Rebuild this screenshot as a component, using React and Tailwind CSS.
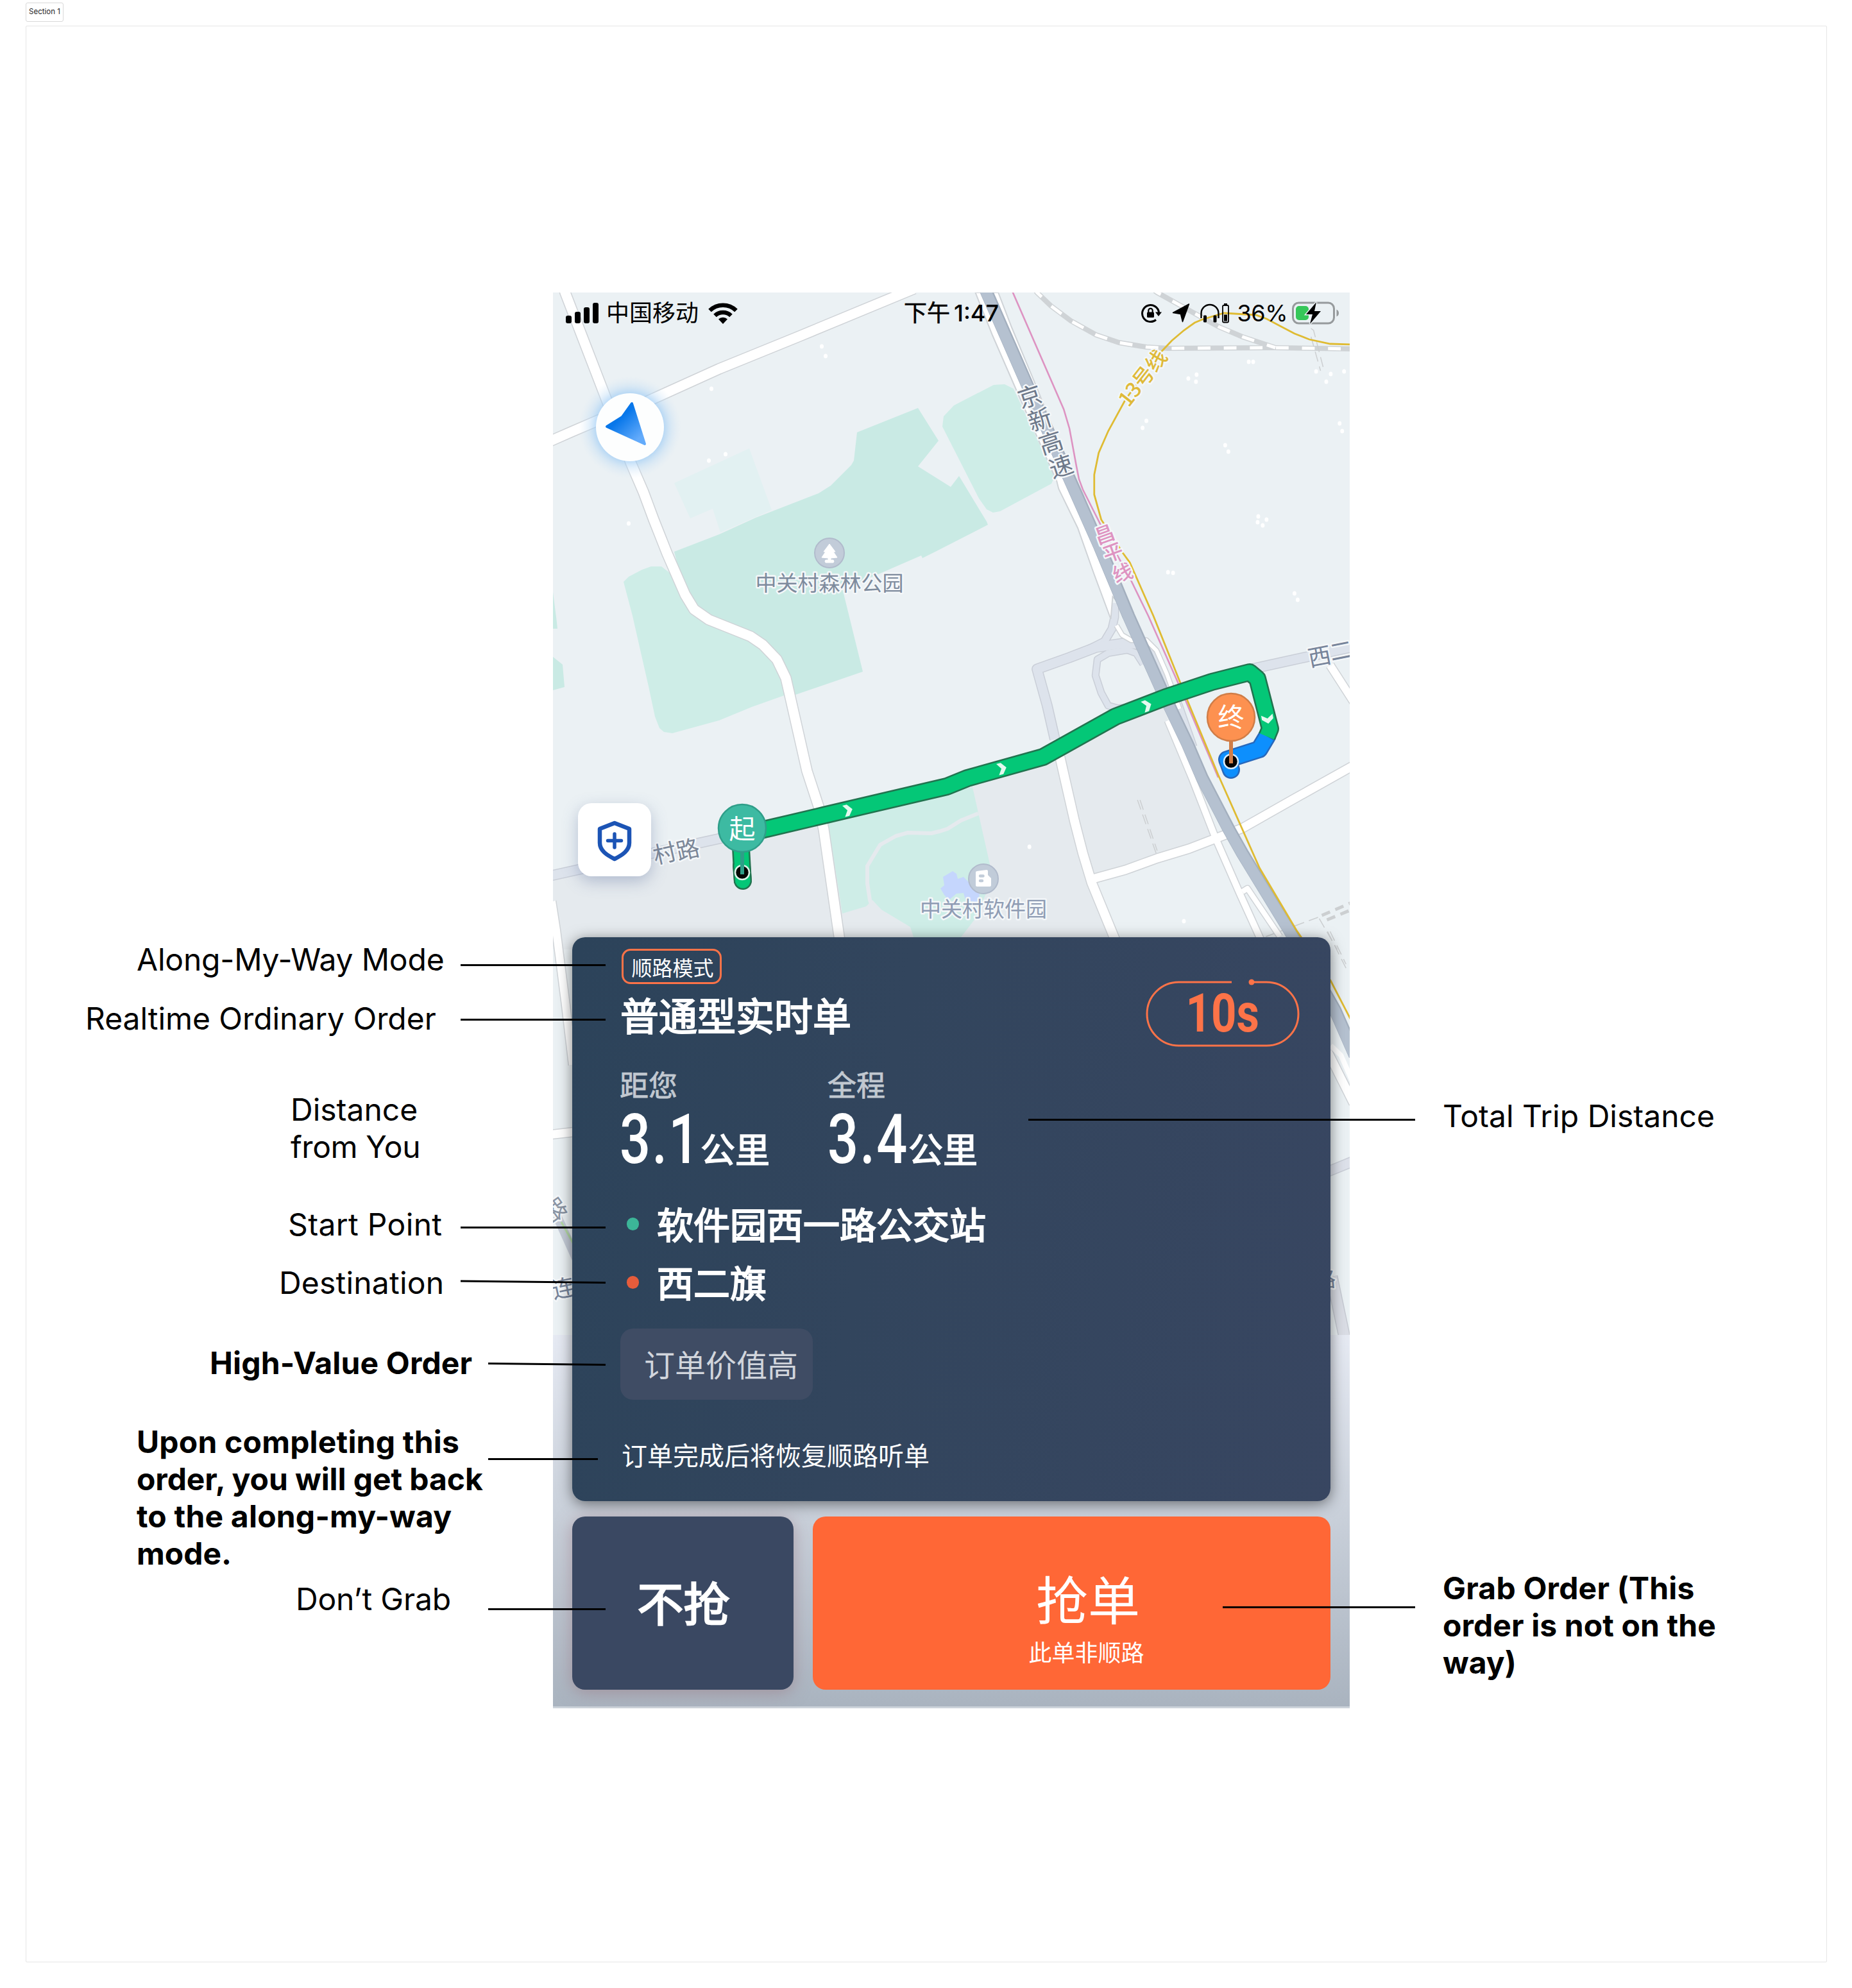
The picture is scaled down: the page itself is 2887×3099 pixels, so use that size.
import React from "react";

const CJK = "font-['Noto_Sans_CJK_SC',sans-serif]";

const casing = "#cfd3d7";

function Road({ d, w, fill = "#ffffff", edge = casing }) {
  return (
    <g fill="none" strokeLinejoin="round">
      <path d={d} stroke={edge} strokeWidth={w + 3} />
      <path d={d} stroke={fill} strokeWidth={w} />
    </g>
  );
}

function RoadNetwork({ roads }) {
  return (
    <g fill="none" strokeLinejoin="round">
      {roads.map(([d, w]) => (
        <path key={d} d={d} stroke={casing} strokeWidth={w + 3} />
      ))}
      {roads.map(([d, w]) => (
        <path key={`${d}-fill`} d={d} stroke="#fff" strokeWidth={w} />
      ))}
    </g>
  );
}

function MapText({ x, y, r = 0, size = 36, color, children, weight = 400 }) {
  return (
    <text
      x={x}
      y={y}
      transform={`rotate(${r} ${x} ${y})`}
      fontSize={size}
      fontWeight={weight}
      fill={color}
      stroke="#f4f7f9"
      strokeWidth="5"
      strokeLinejoin="round"
      paintOrder="stroke"
      textAnchor="middle"
      dy="0.37em"
    >
      {children}
    </text>
  );
}

const westRoads = [
  ["M876 440L881 456L952 640L984 723L1003 767L1019 810L1040 863L1068 927L1082 950L1105 966L1170 992L1189 1005L1211 1028L1225 1057L1231 1083L1258 1202L1276 1257L1284 1293L1311 1480", 15],
  ["M850 691L891 673L933 655L995 632L1121 575L1244 525L1425 450", 15],
  ["M860 1405L867 1450L882 1567L893 1660", 12],
  ["M855 1769L900 1764", 13],
  ["M2070 1640L2110 1720", 13],
];

const eastRoads = [
  ["M1654 1180L1677 1280L1690 1330L1704 1376L1745 1475", 14],
  ["M1824 1123L1862 1213L1899 1307L1937 1393L1970 1465", 10],
  ["M1941 1390L1949 1385L2000 1460", 8],
  ["M2079 1037L2116 1094", 12],
  ["M1702 1371L1757 1356L1807 1338L1857 1323L1899 1307L1941 1291L2021 1246L2120 1191", 13],
];

const ramps = [
  "M1950 1044L2116 1008",
  "M1646 1152L1634 1100L1618 1043L1669 1025L1711 1009L1753 1003L1776 1004L1795 1016L1809 1036L1839 1100L1862 1165",
];

const westSpecks = [
  [1281, 540], [1287, 555], [1109, 606], [1131, 708], [1105, 718], [980, 816],
];

const eastSpecks = [
  [1951, 564], [1958, 564], [1856, 590], [1869, 584], [1868, 595], [2057, 579],
  [2080, 583], [2073, 595], [2101, 579], [1790, 656], [1784, 667], [2094, 660],
  [2098, 672], [1914, 694], [1919, 704], [1966, 805], [1979, 810], [1965, 814],
  [1973, 819], [1824, 892], [1832, 893], [2023, 925], [2028, 935], [1606, 1320],
  [1849, 1436],
];

const route =
  "M1158 1376L1154 1303L1195 1292L1284 1271L1476 1226L1508 1213L1626 1180L1739 1117L1817 1087L1889 1063L1948 1048L1960 1058L1980 1136L1975 1148";
const routeEnd = "M1975 1148L1963 1168L1913 1184L1919 1200";
const highway =
  "M1533 440L1539 456L1604 603L1665 737L1717 853L1762 960L1813 1073L1855 1160L1878 1213L1920 1293L1941 1330L2015 1450L2087 1575L2118 1645";
const railA =
  "M1612 448L1618 456L1640 477L1671 500L1711 522L1747 534L1790 541L1824 543L1991 542L2118 544";
const railB = "M1796 448L1807 456L1903 509L1941 525L1993 542";

function Specks({ points }) {
  return points.map(([x, y]) => (
    <ellipse key={`${x}-${y}`} cx={x} cy={y} rx="3" ry="3.6" fill="#fff" />
  ));
}

function Chevron({ x, y, r }) {
  return (
    <path
      transform={`translate(${x} ${y}) rotate(${r})`}
      d="M-7 -9L0 -9L7 0L0 9L-7 9L-1 0Z"
      fill="#e4f9ef"
    />
  );
}

function CityMap() {
  return (
    <svg
      className="absolute inset-0 h-full w-full font-['Noto_Sans_CJK_SC',sans-serif]"
      viewBox="862 456 1242 2207"
      preserveAspectRatio="none"
    >
      <defs>
        <linearGradient id="veil" x1="0" y1="0" x2="0" y2="1">
          <stop offset="0" stopColor="#e6eaf3" />
          <stop offset="0.5" stopColor="#c8cfd9" />
          <stop offset="1" stopColor="#a9b3bf" />
        </linearGradient>
        <linearGradient id="arrow" x1="0.2" y1="0.2" x2="0.8" y2="0.9">
          <stop offset="0.25" stopColor="#0877ea" />
          <stop offset="1" stopColor="#63abfb" />
        </linearGradient>
        <radialGradient id="glow">
          <stop offset="0.6" stopColor="#8cc3f5" stopOpacity="0.75" />
          <stop offset="0.8" stopColor="#b5d7f5" stopOpacity="0.35" />
          <stop offset="1" stopColor="#d5e6f5" stopOpacity="0" />
        </radialGradient>
      </defs>
      <rect x="862" y="456" width="1242" height="2207" fill="#ebf1f4" />
      <path d="M862 1372L1170 1298L1475 1228L1640 1185L1760 1120L1812 1100L1895 1307L1703 1372L1738 1480L862 1480Z" fill="#e5eaee" />

      {/* parks and water */}
      <g fill="#ceede7">
        <path d="M972 907L980 899L1001 888L1015 883L1031 883L1044 893L1080 950L1189 1005L1225 1060L1231 1081L1172 1102L1121 1123L1048 1143L1035 1141L1028 1135L1021 1117L1011 1070L986 960Z" />
        <path d="M1549 600L1566 599L1580 606L1644 743L1639 754L1559 797L1548 799L1538 794L1526 777L1469 665L1471 649L1487 632Z" />
        <path d="M1289 1270L1516 1227L1543 1347L1543 1380L1518 1435L1491 1470L1427 1470L1419 1445L1374 1418L1360 1403L1350 1413L1313 1424Z" />
      </g>
      <path d="M1051 753L1168 699L1203 795L1123 830L1111 793L1076 808Z" fill="#e2f1f2" />
      <g fill="#c9eae4">
        <path d="M1051 860L1121 833L1178 807L1276 769L1295 757L1327 725L1331 718L1336 674L1431 636L1463 687L1431 727L1482 759L1495 742L1538 813L1540 818L1460 859L1438 870L1436 866L1367 896L1313 917L1345 1047L1240 1083L1225 1057L1189 1005L1105 965L1068 927Z" />
        <path d="M862 923L868 970L869 980L862 980Z" />
        <path d="M862 1024L877 1036L880 1071L862 1076Z" />
      </g>
      <path d="M1525 1268L1498 1279L1477 1292L1464 1296L1452 1299L1415 1298L1397 1303L1372 1317L1352 1350L1352 1377L1356 1403L1362 1420" fill="none" stroke="#e5eaee" strokeWidth="6" />
      <path d="M1470 1367L1485 1358L1491 1362L1493 1370L1502 1367L1508 1373L1520 1388L1527 1393L1525 1407L1505 1403L1502 1392L1491 1393L1479 1403L1472 1395L1466 1385L1472 1380Z" fill="#c5d6fd" />

      <Specks points={westSpecks} />
      <Road d="M850 1367L990 1336L1150 1301" w={14} fill="#dde3ec" edge="#c9ced7" />
      <RoadNetwork roads={westRoads} />

      {/* eastern district */}
      <g transform="matrix(0.991 0 0 1 13.14 0)">
        <Specks points={eastSpecks} />
        <g fill="none">
          <g stroke="#cfd3d6" strokeWidth="8">
            <path d={railA} />
            <path d={railB} />
          </g>
          <g stroke="#fff" strokeWidth="5" strokeDasharray="20 21">
            <path d={railA} />
            <path d={railB} />
          </g>
          <g stroke="#cccfd1" strokeWidth="1.5" strokeDasharray="16 8">
            <path d="M2049 512L2053 515L2068 572" />
            <path d="M2049 525L2064 578" />
            <path d="M1776 1247L1806 1332" />
            <path d="M1780 1247L1807 1326" />
            <path d="M1978 1460L2060 1430" />
            <path d="M2075 1452L2106 1513" />
            <path d="M2079 1452L2104 1503" />
            <path d="M2062 1432L2090 1480" />
          </g>
          <g stroke="#cccfd1" strokeWidth="5" strokeDasharray="14 9">
            <path d="M2066 1427L2115 1406" />
            <path d="M2074 1434L2115 1417" />
          </g>
        </g>

        {ramps.map((d) => (
          <Road key={d} d={d} w={14} fill="#dde3ec" edge="#c9ced7" />
        ))}
        <Road d="M1740 940L1740 962L1736 980L1724 1000L1700 1012" w={11} fill="#dde3ec" edge="#c9ced7" />
        <Road d="M1785 1035L1774 1018L1760 1013L1730 1018L1713 1028L1710 1053L1719 1080L1730 1100L1745 1104L1760 1103" w={9} fill="#dde3ec" edge="#c9ced7" />
        <path d="M1618 1043L1669 1025L1711 1009L1753 1003L1776 1004" fill="none" stroke="#dde3ec" strokeWidth="14" />
        <Road d="M1743 975L1752 990L1766 998L1790 998L1806 1014L1822 1050L1842 1105" w={6} />
        <RoadNetwork roads={eastRoads} />
        <path d="M1521 456L1548 523L1585 607L1649 750L1652 762L1682 823L1707 893L1734 965L1737 930L1765 960L1690 770L1680 750L1652 690L1618 605L1578 510L1557 456Z" fill="#fff" stroke={casing} strokeWidth="2" />
        <path d="M2080 1630L2096 1645L2116 1690" fill="none" stroke="#fff" strokeWidth="8" />

        <path d={highway} fill="none" stroke="#a3afbe" strokeWidth="20" strokeLinejoin="round" />
        <path d={highway} fill="none" stroke="#b5c1d0" strokeWidth="17" strokeLinejoin="round" transform="translate(-1 0)" />

        {/* metro lines */}
        <path d="M1575 440L1580 456L1660 638L1669 668L1680 727L1684 747L1690 763L1718 818L1765 903L1793 960L1841 1067L1903 1212" fill="none" stroke="#dd93c2" strokeWidth="2.600" />
        <path d="M2118 537L2079 536L2046 529L2023 520L1979 497L1962 491L1912 488L1878 498L1866 503L1849 515L1830 531L1808 554L1757 623L1730 672L1715 706L1708 740L1708 771L1719 810L1753 862L1764 877L1801 960L1855 1093L1903 1208L1968 1353L2026 1450L2080 1529L2118 1602" fill="none" stroke="#dfbb32" strokeWidth="2.800" />
      </g>

      <Road d="M2066 1828L2110 1810" w={14} fill="#dde1ea" edge="#c9ced7" />
      <Road d="M2076 1990L2096 2085" w={16} fill="#dadde5" edge="#c6cad2" />
      <path d="M868 1895L902 1970" fill="none" stroke="#c5ccd8" strokeWidth="14" />
      <path d="M875 1905L900 1950" fill="none" stroke="#b3d9a4" strokeWidth="3" />

      {/* trip route */}
      <g fill="none" strokeLinejoin="round" strokeLinecap="round">
        <path d={routeEnd} stroke="#2768bb" strokeWidth="28" />
        <path d={route} stroke="#22734f" strokeWidth="28" strokeLinecap="butt" />
        <path d="M1158 1373L1156 1350" stroke="#22734f" strokeWidth="28" />
        <path d={routeEnd} stroke="#0d8ffd" strokeWidth="23" strokeLinecap="butt" />
        <path d="M1913 1184L1919 1200" stroke="#0d8ffd" strokeWidth="23" />
        <path d={route} stroke="#04c777" strokeWidth="23" strokeLinecap="butt" />
        <path d="M1158 1373L1156 1350" stroke="#04c777" strokeWidth="23" />
      </g>
      <Chevron x={1322} y={1263} r={-14} />
      <Chevron x={1562} y={1198} r={-14} />
      <Chevron x={1788} y={1100} r={-20} />
      <Chevron x={1976} y={1121} r={80} />

      {/* place names */}
      <MapText x={1605} y={618} r={-18} size={37} color="#6d7889">京</MapText>
      <MapText x={1621} y={654} r={-18} size={37} color="#6d7889">新</MapText>
      <MapText x={1638} y={690} r={-18} size={37} color="#6d7889">高</MapText>
      <MapText x={1654} y={727} r={-18} size={37} color="#6d7889">速</MapText>
      <MapText x={1722} y={833} r={-20} size={31} color="#de93c1" weight={500}>昌</MapText>
      <MapText x={1735} y={861} r={-20} size={31} color="#de93c1" weight={500}>平</MapText>
      <MapText x={1750} y={893} r={-20} size={31} color="#de93c1" weight={500}>线</MapText>
      <MapText x={1781} y={589} r={-52} size={32} color="#dfba38" weight={500}>13号线</MapText>
      <MapText x={2057} y={1023} r={-11} size={36} color="#77849a">西</MapText>
      <MapText x={2091} y={1014} r={-11} size={36} color="#77849a">二</MapText>
      <MapText x={1036} y={1330} r={-13} size={36} color="#7c8798">村</MapText>
      <MapText x={1072} y={1324} r={-13} size={36} color="#7c8798">路</MapText>
      <MapText x={1293} y={909} size={33} color="#7e8b9d">中关村森林公园</MapText>
      <MapText x={1533} y={1417} size={33} color="#8f9cb4">中关村软件园</MapText>
      <MapText x={866} y={1886} r={55} size={36} color="#8a94a3">路</MapText>
      <MapText x={878} y={2008} r={-12} size={36} color="#77849a">连</MapText>
      <MapText x={2065} y={1994} r={-5} size={34} color="#77849a">路</MapText>

      {/* park marker */}
      <circle cx="1293" cy="862" r="23" fill="#c2ccd9" stroke="#b1bbcc" strokeWidth="2" />
      <path d="M1293 848L1302 860L1299 860L1305 869L1295 870V873H1299Q1301 875 1299 877H1287Q1285 875 1287 873H1291V870L1281 869L1287 860L1284 860Z" fill="#fff" stroke="#fff" strokeLinejoin="round" />
      {/* office park marker */}
      <circle cx="1533" cy="1370" r="23" fill="#c1ccd9" stroke="#b1bbcc" strokeWidth="2" />
      <path d="M1521 1360Q1521 1358 1523 1358L1538 1356Q1540 1356 1540 1358V1364L1545 1369V1380Q1545 1382 1543 1382H1523Q1521 1382 1521 1380Z" fill="#fff" />
      <path d="M1528 1365.500H1532.500M1528 1373H1531" stroke="#c1ccd9" strokeWidth="4.500" strokeLinecap="round" />

      {/* start pin */}
      <circle cx="1157" cy="1360" r="11" fill="#050805" stroke="#def5ea" strokeWidth="2.500" />
      <path d="M1157 1325V1363" stroke="#2d9f88" strokeWidth="6" />
      <circle cx="1157" cy="1291" r="37" fill="#3dbaa2" stroke="#2f9e89" strokeWidth="2.500" />
      <text x="1157" y="1307" textAnchor="middle" fontSize="41" fill="#fff">起</text>
      {/* destination pin */}
      <circle cx="1919" cy="1187" r="11" fill="#050505" stroke="#d9ecfd" strokeWidth="2.500" />
      <path d="M1919 1153V1190" stroke="#d07d47" strokeWidth="6" />
      <circle cx="1919" cy="1118" r="37" fill="#fd9150" stroke="#d07d47" strokeWidth="2.500" />
      <text x="1919" y="1133" textAnchor="middle" fontSize="41" fill="#fff">终</text>

      {/* heading indicator */}
      <circle cx="982" cy="666" r="80" fill="url(#glow)" />
      <circle cx="982" cy="666" r="53" fill="#fdfefe" />
      <path d="M985 629L1005 692L946 665L970 650Z" fill="url(#arrow)" stroke="url(#arrow)" strokeWidth="4" strokeLinejoin="round" />

      <rect x="862" y="2081" width="1242" height="582" fill="url(#veil)" />
      <rect x="862" y="2660" width="1242" height="3" fill="#ccd3da" />
    </svg>
  );
}

function StatusBar() {
  return (
    <div className={`relative grid h-16 grid-cols-[1fr_auto_1fr] items-center px-4 text-[36px] leading-none text-black ${CJK}`}>
      <div className="ml-1 flex items-center">
        <svg className="h-8 w-[52px]" viewBox="0 0 52 32">
          <rect x="0" y="20" width="9" height="12" rx="3" />
          <rect x="14" y="14" width="9" height="18" rx="3" />
          <rect x="28" y="7" width="9" height="25" rx="3" />
          <rect x="42" y="0" width="9" height="32" rx="3" />
        </svg>
        <span className="ml-[11px] block h-[42px] leading-[36px]">中国移动</span>
        <svg className="ml-[15px] h-[33px] w-[46px]" viewBox="0 0 46 33">
          <g fill="none" stroke="#000" strokeWidth="6.500">
            <path d="M2.500 12A29.500 29.500 0 0 1 43.500 12" />
            <path d="M10.500 20A18 18 0 0 1 35.500 20" />
          </g>
          <path d="M23 33L16 25.500A10 10 0 0 1 30 25.500Z" />
        </svg>
      </div>
      <div className="flex items-center gap-[6px]">
        <span className="block h-[42px] leading-[36px] [-webkit-text-stroke:0.600px]">下午</span>
        <span className="font-['Inter',sans-serif] text-[36px] font-medium">1:47</span>
      </div>
      <div className="flex items-center justify-end">
        <svg className="h-8 w-[33px]" viewBox="0 0 33 32">
          <path d="M28.500 15A13 13 0 1 0 24 26.500" fill="none" stroke="#000" strokeWidth="3" />
          <path d="M23 14.500H33L28 21Z" />
          <rect x="10" y="14.500" width="11" height="8.500" rx="1.500" />
          <path d="M12.300 15V12a3.200 3.200 0 0 1 6.400 0v3" fill="none" stroke="#000" strokeWidth="2.200" />
        </svg>
        <svg className="ml-4 h-[30px] w-7" viewBox="0 0 28 30">
          <path d="M26.500 1L16.500 28.500L13.500 16.500L1.500 14.500Z" stroke="#000" strokeWidth="1.500" strokeLinejoin="round" />
        </svg>
        <svg className="ml-4 h-8 w-[46px]" viewBox="0 0 46 32">
          <path d="M1.500 24V16.500A13.500 13.500 0 0 1 28.500 16.500V24" fill="none" stroke="#000" strokeWidth="2.400" />
          <rect x="5" y="19.500" width="5" height="11" rx="1.500" />
          <rect x="20.500" y="19.500" width="5" height="11" rx="1.500" />
          <rect x="35" y="4" width="9" height="26.500" rx="1.500" fill="none" stroke="#000" strokeWidth="1.800" />
          <rect x="37" y="1" width="5" height="2" />
          <rect x="37" y="18.500" width="5" height="10" />
        </svg>
        <span className="ml-[12px] font-['Inter',sans-serif] text-[36px] tracking-[-0.500px]">36%</span>
        <svg className="ml-[7px] h-9 w-[74px]" viewBox="0 0 74 36">
          <rect x="1.500" y="2" width="64" height="32" rx="9" fill="none" stroke="#969a9c" strokeWidth="3" />
          <path d="M69.500 12.500Q73 14 73 18T69.500 23.500Z" fill="#969a9c" />
          <rect x="6" y="7" width="20" height="22" rx="5" fill="#35c759" />
          <path d="M38 1L22 20H32L28 35L45 15H35Z" stroke="#ebf1f4" strokeWidth="3" paintOrder="stroke" />
        </svg>
      </div>
    </div>
  );
}

function Distance({ label, value }) {
  return (
    <div className="w-[324px]">
      <div className="text-[45px] leading-[46px] text-[#c1c8d0] [-webkit-text-stroke:0.800px]">{label}</div>
      <div className="mt-[22px] flex h-[84px] items-baseline">
        <span className="block w-[126px]">
          <span className="block origin-left scale-x-[0.790] font-['Roboto',sans-serif] text-[107px] leading-[84px] font-medium tracking-[3px]">
            {value}
          </span>
        </span>
        <span className="text-[54px] leading-[60px] font-normal [-webkit-text-stroke:1.600px]">公里</span>
      </div>
    </div>
  );
}

function Stop({ name, dot }) {
  return (
    <div className="flex h-[60px] items-center gap-[28px] pl-[8px]">
      <i className={`mt-1 h-5 w-[19px] rounded-full ${dot}`} />
      <span className="text-[57px] leading-[60px] font-normal [-webkit-text-stroke:2px]">{name}</span>
    </div>
  );
}

function OrderCard() {
  return (
    <section className="ml-[30px] h-[879px] w-[1182px] rounded-[20px] bg-[linear-gradient(100deg,#2c435a,#32455d_40%,#384661)] pt-[18px] pr-[48px] pl-[77px] text-white shadow-[0_4px_22px_rgba(0,0,0,0.5)]">
      <div className="flex h-[150px] justify-between">
        <div>
          <div className="flex h-[55px] w-[156px] items-center justify-center rounded-[14px] border-[3px] border-[#fd7348] pl-[3px] text-[32px] leading-[40px]">
            顺路模式
          </div>
          <h1 className="mt-[17px] ml-[-2px] text-[60px] leading-[60px] font-normal [-webkit-text-stroke:2px]">普通型实时单</h1>
        </div>
        <div className="relative mt-[47px] h-[108px] w-[240px] text-[#fd7348]">
          <svg className="absolute inset-0" width="240" height="108" viewBox="0 0 240 108">
            <path d="M134 5H51.500A49.500 49.500 0 0 0 51.500 104H188.500A49.500 49.500 0 0 0 188.500 5H166" fill="none" stroke="currentColor" strokeWidth="3" />
            <circle cx="165" cy="5" r="4.500" fill="currentColor" />
          </svg>
          <div className="flex h-full items-center justify-center">
            <span className="block scale-x-[0.820] font-['Roboto',sans-serif] text-[84px] leading-[100px] font-bold">10s</span>
          </div>
        </div>
      </div>
      <div className="mt-[38px] ml-[-3px] flex">
        <Distance label="距您" value="3.1" />
        <Distance label="全程" value="3.4" />
      </div>
      <div className="mt-[57px]">
        <Stop name="软件园西一路公交站" dot="bg-[#3cb598]" />
      </div>
      <div className="mt-[31px]">
        <Stop name="西二旗" dot="bg-[#e65c3b]" />
      </div>
      <div className="mt-[44px] ml-[-2px] flex h-[111px] w-[300px] items-center rounded-[20px] bg-[#3f4c64] pb-1 pl-[37px] text-[48px] leading-[60px] text-[#d1d5dc]">
        订单价值高
      </div>
      <p className="mt-[60px] text-[40px] leading-[50px]">订单完成后将恢复顺路听单</p>
    </section>
  );
}

function Phone() {
  return (
    <main className={`absolute top-[456px] left-[862px] h-[2207px] w-[1242px] overflow-hidden ${CJK}`}>
      <CityMap />
      <div className="relative flex h-full flex-col">
        <StatusBar />
        <button className="mt-[732px] ml-[39px] flex h-[114px] w-[114px] items-center justify-center rounded-[21px] bg-white pt-[3px] shadow-[0_8px_24px_rgba(80,100,150,0.35)]">
          <svg width="56" height="66" viewBox="0 0 56 66" fill="none" stroke="#1c54b5" strokeLinejoin="round" strokeLinecap="round">
            <path d="M28 5L51 14V36C51 48 40 55 28 61C16 55 5 48 5 36V14Z" strokeWidth="6.500" />
            <path d="M28 22V43M17.500 32.500H38.500" strokeWidth="5.500" />
          </svg>
        </button>
        <div className="h-[95px]" />
        <OrderCard />
        <div className="mt-6 flex h-[270px] gap-[30px] pr-[30px] pl-[30px] text-white">
          <button className="w-[345px] rounded-[20px] bg-[#3a4862] pb-[7px] pl-[2px] text-[72px] leading-[72px] font-normal shadow-[0_4px_26px_rgba(150,110,120,0.5)] [-webkit-text-stroke:2.400px]">
            不抢
          </button>
          <button className="flex flex-1 flex-col items-center rounded-[20px] bg-[#ff6736] pt-[84px] pl-[51px]">
            <span className="text-[81px] leading-[84px]">抢单</span>
            <span className="mt-[22px] mr-[5px] text-[36px] leading-[40px]">此单非顺路</span>
          </button>
        </div>
      </div>
    </main>
  );
}

function Note({ at, bold, children }) {
  return (
    <div className={`absolute text-[48px] leading-[58px] whitespace-pre text-black ${bold ? "font-bold" : "font-normal"} ${at}`}>
      {children}
    </div>
  );
}

function Connectors() {
  return (
    <svg className="absolute inset-0" width="2887" height="3099" viewBox="0 0 2887 3099" stroke="#000" strokeWidth="3">
      <path d="M718 1504.500H944M718 1589.500H944M718 1913.500H944M718 1997L944 1999.500M761 2125.500L944 2127.500M761 2274.500H932M761 2508.500H944M1603 1745.500H2206M1906 2505.500H2206" />
    </svg>
  );
}

export default function App() {
  return (
    <div className="relative flex h-[3099px] w-[2887px] flex-col bg-white pt-1 pl-10 font-['Inter',sans-serif]">
      <div className="flex h-[30px] w-[59px] items-center justify-center rounded-[3px] border border-[#d9d9d9] pb-px text-[11.500px] leading-none text-[#1e1e1e]">
        Section 1
      </div>
      <div className="mt-[6px] h-[3019px] w-[2808px] rounded-[2px] border border-[#e6e6e6]" />
      <Phone />
      <Note at="top-[1467px] left-[213px] tracking-[-0.200px]">Along-My-Way Mode</Note>
      <Note at="top-[1559px] left-[133px] tracking-[-0.050px]">Realtime Ordinary Order</Note>
      <Note at="top-[1701px] left-[453px]">
        <div>Distance</div>
        <div className="tracking-[-0.400px]">from You</div>
      </Note>
      <Note at="top-[1880px] left-[449px] tracking-[0.350px]">Start Point</Note>
      <Note at="top-[1971px] left-[435px] tracking-[0.200px]">Destination</Note>
      <Note bold at="top-[2096px] left-[327px] tracking-[0.150px]">High-Value Order</Note>
      <Note bold at="top-[2219px] left-[213px]">
        <div className="tracking-[0.200px]">Upon completing this</div>
        <div className="tracking-[-0.080px]">order, you will get back</div>
        <div className="tracking-[0.200px]">to the along-my-way</div>
        <div>mode.</div>
      </Note>
      <Note at="top-[2464px] left-[461px] tracking-[-0.150px]">Don’t Grab</Note>
      <Note at="top-[1711px] left-[2249px]">Total Trip Distance</Note>
      <Note bold at="top-[2447px] left-[2249px]">
        <div className="tracking-[0.200px]">Grab Order (This</div>
        <div className="tracking-[0.100px]">order is not on the</div>
        <div>way)</div>
      </Note>
      <Connectors />
    </div>
  );
}
